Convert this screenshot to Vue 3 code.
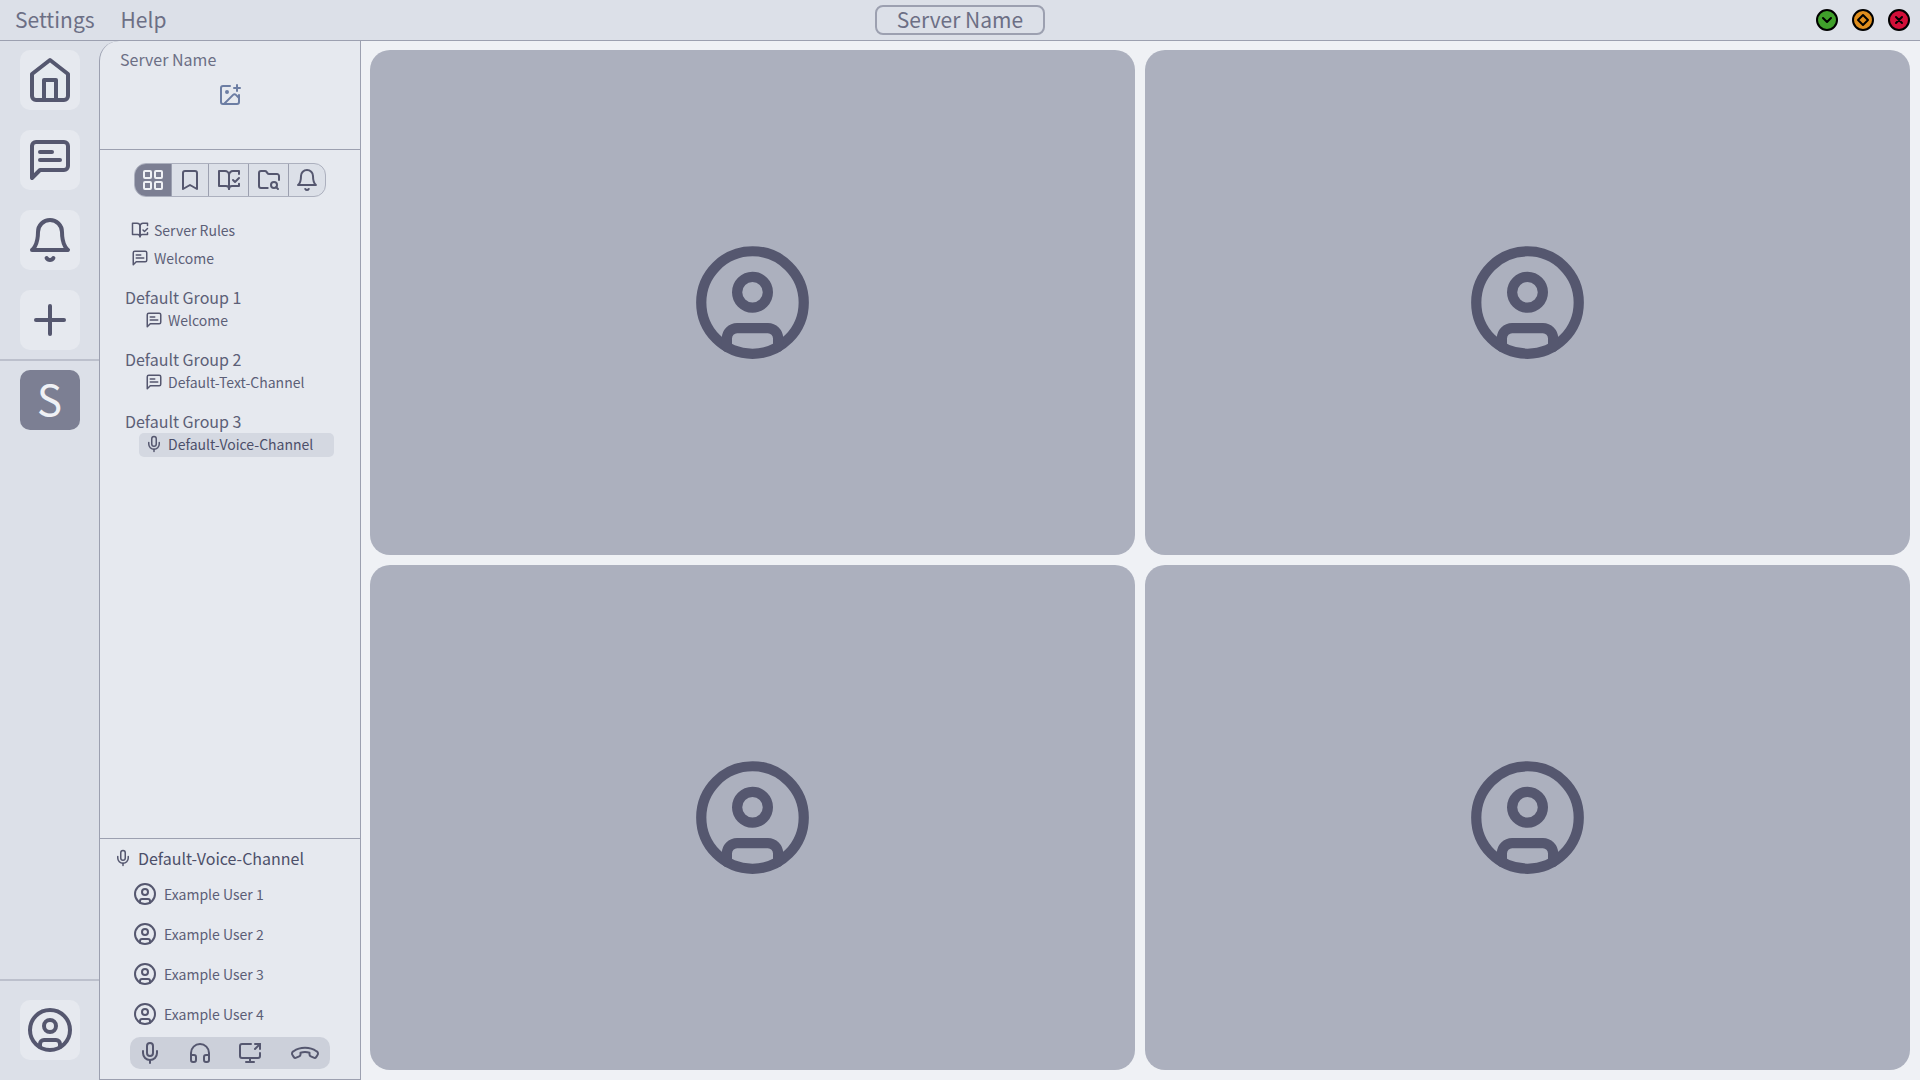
<script setup>
import { ref } from 'vue'

const icons = {
  home: '<path d="m3 9 9-7 9 7v11a2 2 0 0 1-2 2H5a2 2 0 0 1-2-2z"/><path d="M9 22V12h6v10"/>',
  message: '<path d="M21 15a2 2 0 0 1-2 2H7l-4 4V5a2 2 0 0 1 2-2h14a2 2 0 0 1 2 2z"/><path d="M13 8H7"/><path d="M17 12H7"/>',
  bell: '<path d="M6 8a6 6 0 0 1 12 0c0 7 3 9 3 9H3s3-2 3-9"/><path d="M10.3 21a1.94 1.94 0 0 0 3.4 0"/>',
  plus: '<path d="M5 12h14"/><path d="M12 5v14"/>',
  user: '<circle cx="12" cy="12" r="10"/><circle cx="12" cy="10" r="3"/><path d="M7 20.662V19a2 2 0 0 1 2-2h6a2 2 0 0 1 2 2v1.662"/>',
  imagePlus: '<path d="M21 12v7a2 2 0 0 1-2 2H5a2 2 0 0 1-2-2V5a2 2 0 0 1 2-2h7"/><path d="M16 5h6"/><path d="M19 2v6"/><circle cx="9" cy="9" r="1"/><path d="m21 15-3.086-3.086a2 2 0 0 0-2.828 0L6 21"/>',
  grid: '<rect width="7" height="7" x="3" y="3" rx="1"/><rect width="7" height="7" x="14" y="3" rx="1"/><rect width="7" height="7" x="14" y="14" rx="1"/><rect width="7" height="7" x="3" y="14" rx="1"/>',
  bookmark: '<path d="m19 21-7-4-7 4V5a2 2 0 0 1 2-2h10a2 2 0 0 1 2 2v16z"/>',
  book: '<path d="M8 3H2v15h7c1.7 0 3 1.3 3 3V7c0-2.2-1.8-4-4-4Z"/><path d="m16 12 2 2 4-4"/><path d="M22 6V3h-6c-2.2 0-4 1.8-4 4v14c0-1.7 1.3-3 3-3h7v-2.3"/>',
  folder: '<path d="M10.7 20H4a2 2 0 0 1-2-2V5a2 2 0 0 1 2-2h3.9a2 2 0 0 1 1.69.9l.81 1.2a2 2 0 0 0 1.67.9H20a2 2 0 0 1 2 2v4.1"/><path d="m21 21-1.9-1.9"/><circle cx="17" cy="17" r="3"/>',
  mic: '<path d="M12 2a3 3 0 0 0-3 3v7a3 3 0 0 0 6 0V5a3 3 0 0 0-3-3Z"/><path d="M19 10v2a7 7 0 0 1-14 0v-2"/><path d="M12 19v3"/>',
  headphones: '<path d="M3 14h3a2 2 0 0 1 2 2v3a2 2 0 0 1-2 2H5a2 2 0 0 1-2-2v-7a9 9 0 0 1 18 0v7a2 2 0 0 1-2 2h-1a2 2 0 0 1-2-2v-3a2 2 0 0 1 2-2h3"/>',
  screen: '<path d="M13 3H4a2 2 0 0 0-2 2v10a2 2 0 0 0 2 2h16a2 2 0 0 0 2-2v-3"/><path d="M8 21h8"/><path d="M12 17v4"/><path d="m17 8 5-5"/><path d="M17 3h5v5"/>',
}

const railItems = [
  { icon: 'home', label: 'Home' },
  { icon: 'message', label: 'Messages' },
  { icon: 'bell', label: 'Notifications' },
  { icon: 'plus', label: 'Add server' },
]

const views = [
  { icon: 'grid', label: 'All channels' },
  { icon: 'bookmark', label: 'Bookmarks' },
  { icon: 'book', label: 'Rules' },
  { icon: 'folder', label: 'Browse files' },
  { icon: 'bell', label: 'Notifications' },
]
const activeView = ref('grid')

const topChannels = [
  { icon: 'book', name: 'Server Rules' },
  { icon: 'message', name: 'Welcome' },
]
const groups = [
  { name: 'Default Group 1', channel: 'Welcome', icon: 'message' },
  { name: 'Default Group 2', channel: 'Default-Text-Channel', icon: 'message' },
  { name: 'Default Group 3', channel: 'Default-Voice-Channel', icon: 'mic' },
]
const activeChannel = ref('Default-Voice-Channel')

const users = ['Example User 1', 'Example User 2', 'Example User 3', 'Example User 4']
</script>

<template>
  <div class="app">
    <header class="titlebar">
      <nav class="menu">
        <button type="button">Settings</button>
        <button type="button">Help</button>
      </nav>
      <h1 class="title">Server Name</h1>
      <div class="window-controls">
        <button type="button" class="minimize" aria-label="Minimize">
          <svg viewBox="0 0 18 18"><path d="m5 7 4 4 4-4" /></svg>
        </button>
        <button type="button" class="maximize" aria-label="Maximize">
          <svg viewBox="0 0 18 18"><path d="m9 4 5 5-5 5-5-5z" /></svg>
        </button>
        <button type="button" class="close" aria-label="Close">
          <svg viewBox="0 0 18 18"><path d="m6 6 6 6M12 6l-6 6" /></svg>
        </button>
      </div>
    </header>

    <div class="body">
      <nav class="rail" aria-label="Servers">
        <div class="rail-group">
          <button v-for="item in railItems" :key="item.icon" type="button" class="rail-button" :aria-label="item.label">
            <svg class="icon large" viewBox="0 0 24 24" v-html="icons[item.icon]"></svg>
          </button>
        </div>
        <div class="rail-group servers">
          <button type="button" class="rail-button current">S</button>
        </div>
        <div class="rail-group account">
          <button type="button" class="rail-button" aria-label="Account">
            <svg class="icon large" viewBox="0 0 24 24" v-html="icons.user"></svg>
          </button>
        </div>
      </nav>

      <aside class="panel">
        <section class="server-head">
          <h2>Server Name</h2>
          <button type="button" class="add-image" aria-label="Add server image">
            <svg class="icon" viewBox="0 0 24 24" v-html="icons.imagePlus"></svg>
          </button>
        </section>

        <section class="channels">
          <div class="views">
            <button
              v-for="view in views"
              :key="view.icon"
              type="button"
              :class="{ active: activeView === view.icon }"
              :aria-label="view.label"
              @click="activeView = view.icon"
            >
              <svg class="icon" viewBox="0 0 24 24" v-html="icons[view.icon]"></svg>
            </button>
          </div>

          <ul class="top-channels">
            <li v-for="channel in topChannels" :key="channel.name">
              <button type="button" class="channel">
                <svg class="icon small" viewBox="0 0 24 24" v-html="icons[channel.icon]"></svg>
                {{ channel.name }}
              </button>
            </li>
          </ul>

          <div v-for="group in groups" :key="group.name" class="group">
            <h3>{{ group.name }}</h3>
            <button
              type="button"
              class="channel nested"
              :class="{ selected: activeChannel === group.channel }"
              @click="activeChannel = group.channel"
            >
              <svg class="icon small" viewBox="0 0 24 24" v-html="icons[group.icon]"></svg>
              {{ group.channel }}
            </button>
          </div>
        </section>

        <section class="voice">
          <h3>
            <svg class="icon small" viewBox="0 0 24 24" v-html="icons.mic"></svg>
            Default-Voice-Channel
          </h3>
          <ul class="users">
            <li v-for="user in users" :key="user">
              <svg class="icon" viewBox="0 0 24 24" v-html="icons.user"></svg>
              {{ user }}
            </li>
          </ul>
          <div class="call-controls">
            <button type="button" aria-label="Microphone">
              <svg class="icon" viewBox="0 0 24 24" v-html="icons.mic"></svg>
            </button>
            <button type="button" aria-label="Audio">
              <svg class="icon" viewBox="0 0 24 24" v-html="icons.headphones"></svg>
            </button>
            <button type="button" aria-label="Share screen">
              <svg class="icon" viewBox="0 0 24 24" v-html="icons.screen"></svg>
            </button>
            <button type="button" aria-label="Hang up">
              <svg class="icon phone" viewBox="-2 0 34 24">
                <path d="M2.600 14.200C1.400 12.600 2 11.200 3.600 10.200C10 5.600 20 5.600 26.400 10.200C28 11.200 28.600 12.600 27.400 14.200L26.300 15.900C25.600 17 24.800 17.200 23.700 16.700L20.800 15.400C19.900 15 19.500 14.400 19.500 13.500V11.700C16.600 10.800 13.400 10.800 10.500 11.700V13.500C10.500 14.400 10.100 15 9.200 15.400L6.300 16.700C5.200 17.200 4.400 17 3.700 15.900Z" />
              </svg>
            </button>
          </div>
        </section>
      </aside>

      <main class="stage">
        <article v-for="user in users" :key="user" class="tile" :aria-label="user">
          <svg class="icon avatar" viewBox="0 0 24 24" v-html="icons.user"></svg>
        </article>
      </main>
    </div>
  </div>
</template>

<style>
body {
  margin: 0;
}
</style>

<style scoped>
.app {
  display: flex;
  flex-direction: column;
  min-height: 100vh;
  background: #dce0e8;
  color: #5c5f77;
  font-family: "Noto Sans CJK SC", "Noto Sans", sans-serif;
  font-size: 14px;
}

.app *,
.app {
  box-sizing: border-box;
}

button {
  display: flex;
  align-items: center;
  margin: 0;
  padding: 0;
  border: 0;
  background: none;
  color: inherit;
  font: inherit;
  cursor: pointer;
}

h1,
h2,
h3,
ul {
  margin: 0;
  padding: 0;
  font-weight: 400;
  list-style: none;
}

.icon {
  flex: none;
  width: 24px;
  height: 24px;
  fill: none;
  stroke: #55576f;
  stroke-width: 2;
  stroke-linecap: round;
  stroke-linejoin: round;
}

.icon.small {
  width: 18px;
  height: 18px;
}

.icon.large {
  width: 48px;
  height: 48px;
}

.titlebar {
  display: grid;
  grid-template-columns: 1fr auto 1fr;
  align-items: center;
  height: 41px;
  padding: 0 10px;
  border-bottom: 1px solid #9ca0b0;
  color: #6c6f85;
  font-size: 21px;
  line-height: 26px;
}

.menu {
  display: flex;
  gap: 26px;
  padding: 0 0 2px 5px;
}

.title {
  padding: 0 20px 2px;
  border: 2px solid #9ca0b0;
  border-radius: 8px;
  font-size: 21px;
  line-height: 24px;
}

.window-controls {
  display: flex;
  justify-content: flex-end;
  gap: 14px;
}

.window-controls button {
  width: 22px;
  height: 22px;
  border: 2px solid #000;
  border-radius: 50%;
}

.window-controls svg {
  width: 18px;
  height: 18px;
  fill: none;
  stroke: #000;
  stroke-width: 2;
  stroke-linecap: round;
  stroke-linejoin: round;
}

.minimize {
  background: #40a02b;
}

.maximize {
  background: #df8e1d;
}

.close {
  background: #d20f39;
}

.body {
  display: flex;
  flex: 1;
}

.rail {
  display: flex;
  flex: none;
  flex-direction: column;
  width: 99px;
}

.rail-group {
  display: flex;
  flex-direction: column;
  align-items: center;
  gap: 20px;
  padding: 9px 0;
}

.rail-group.servers {
  flex: 1;
  border-top: 2px solid #bcc0cc;
}

.rail-group.account {
  padding: 19px 0 20px;
  border-top: 2px solid #bcc0cc;
}

.rail-button {
  justify-content: center;
  width: 60px;
  height: 60px;
  border-radius: 10px;
  background: #e6e9ef;
}

.rail-button.current {
  padding-bottom: 5px;
  background: #7c7f93;
  color: #eff1f5;
  font-size: 42px;
}

.panel {
  display: flex;
  flex: none;
  flex-direction: column;
  width: 262px;
  border: 1px solid #9ca0b0;
  border-top: 0;
  border-radius: 20px 0 0 0;
  background: #e6e9ef;
}

.server-head {
  display: flex;
  flex-direction: column;
  height: 109px;
  padding: 6px 20px 0;
  border-bottom: 1px solid #9ca0b0;
}

.server-head h2 {
  color: #6c6f85;
  font-size: 16px;
  line-height: 24px;
}

.add-image {
  align-self: center;
  margin-top: 12px;
}

.add-image .icon {
  stroke: #6c7da3;
}

.channels {
  flex: 1;
  padding: 13px 25px;
}

.views {
  display: grid;
  grid-template-columns: 36px 37px 40px 40px 1fr;
  width: 192px;
  height: 34px;
  margin: 0 auto 21px;
  overflow: hidden;
  border: 1px solid #acb0be;
  border-radius: 12px;
  background: #dce0e8;
}

.views button {
  justify-content: center;
}

.views button + button {
  border-left: 1px solid #9ca0b0;
}

.views .active {
  background: #7c7f93;
}

.views .active .icon {
  stroke: #eff1f5;
}

.top-channels {
  display: flex;
  flex-direction: column;
  gap: 4px;
  margin-bottom: 15px;
}

.channel {
  gap: 5px;
  width: 100%;
  height: 24px;
  padding: 0 6px;
  border-radius: 5px;
  line-height: 24px;
}

.channel.nested {
  width: auto;
  margin: 0 0 0 14px;
  padding-bottom: 2px;
}

.nested.selected {
  width: 195px;
  background: #d4d8e1;
  color: #4c4f69;
}

.group {
  margin-bottom: 14px;
}

.group h3 {
  font-size: 16px;
  line-height: 24px;
}

.voice {
  padding: 7px 0 10px;
  border-top: 1px solid #9ca0b0;
}

.voice h3 {
  display: flex;
  align-items: center;
  gap: 6px;
  padding-left: 14px;
  color: #4c4f69;
  font-size: 16px;
  line-height: 24px;
}

.users {
  padding: 4px 0 3px 33px;
}

.users li {
  display: flex;
  align-items: center;
  gap: 7px;
  height: 40px;
}

.call-controls {
  display: flex;
  align-items: center;
  gap: 26px;
  width: 200px;
  height: 32px;
  margin: 0 auto;
  padding: 0 8px;
  border-radius: 10px;
  background: #ccd0da;
}

.phone {
  width: 34px;
}

.stage {
  display: grid;
  flex: 1;
  grid-template-columns: 1fr 1fr;
  grid-auto-rows: 1fr;
  gap: 10px;
  padding: 9px 10px 10px 9px;
  background: #eff1f5;
}

.tile {
  display: flex;
  align-items: center;
  justify-content: center;
  border-radius: 20px;
  background: #acb0be;
}

.icon.avatar {
  width: 123px;
  height: 123px;
}
</style>
